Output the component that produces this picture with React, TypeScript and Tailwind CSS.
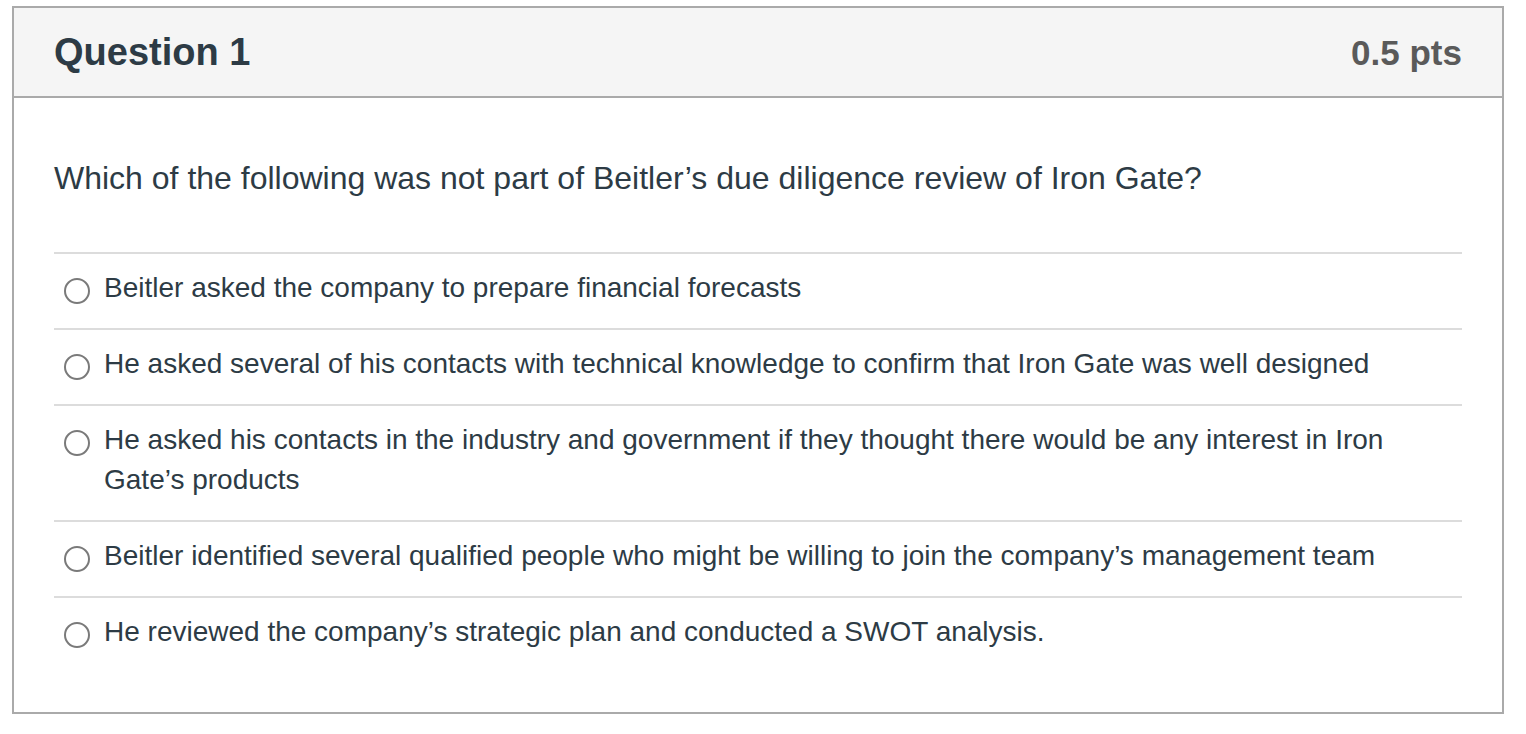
const answers = [
  "Beitler asked the company to prepare financial forecasts",
  "He asked several of his contacts with technical knowledge to confirm that Iron Gate was well designed",
  "He asked his contacts in the industry and government if they thought there would be any interest in Iron Gate’s products",
  "Beitler identified several qualified people who might be willing to join the company’s management team",
  "He reviewed the company’s strategic plan and conducted a SWOT analysis.",
];

export default function App() {
  return (
    <div
      className="min-h-screen bg-white pt-[6px] pl-[12px]"
      style={{ fontFamily: '"Liberation Sans", Arial, Helvetica, sans-serif' }}
    >
      <div className="w-[1492px] h-[708px] border-2 border-[#aaaaaa] bg-white flex flex-col">
        {/* Header */}
        <div className="h-[90px] shrink-0 bg-[#f5f5f5] border-b-2 border-[#aaaaaa] flex items-center justify-between px-10">
          <h2 className="text-[38px] leading-none font-bold text-[#2d3b45]">Question 1</h2>
          <span className="text-[35px] leading-none font-bold text-[#5a5a5a]">0.5 pts</span>
        </div>

        {/* Body */}
        <div className="px-10 pt-[60px] text-[#2d3b45]">
          <p className="text-[32px] leading-[40px] mb-[54px]">
            Which of the following was not part of Beitler’s due diligence review of Iron Gate?
          </p>
          <div className="flex flex-col">
            {answers.map((a) => (
              <label
                key={a}
                className="flex items-start border-t-2 border-[#dcdcdc] pt-[14px] pb-[20px] pl-[10px] pr-4"
              >
                <span className="mt-[10px] w-[26px] h-[26px] shrink-0 rounded-full border-2 border-[#7a7a7a] bg-white" />
                <span className="ml-[14px] text-[28px] leading-[40px]">{a}</span>
              </label>
            ))}
          </div>
        </div>
      </div>
    </div>
  );
}
